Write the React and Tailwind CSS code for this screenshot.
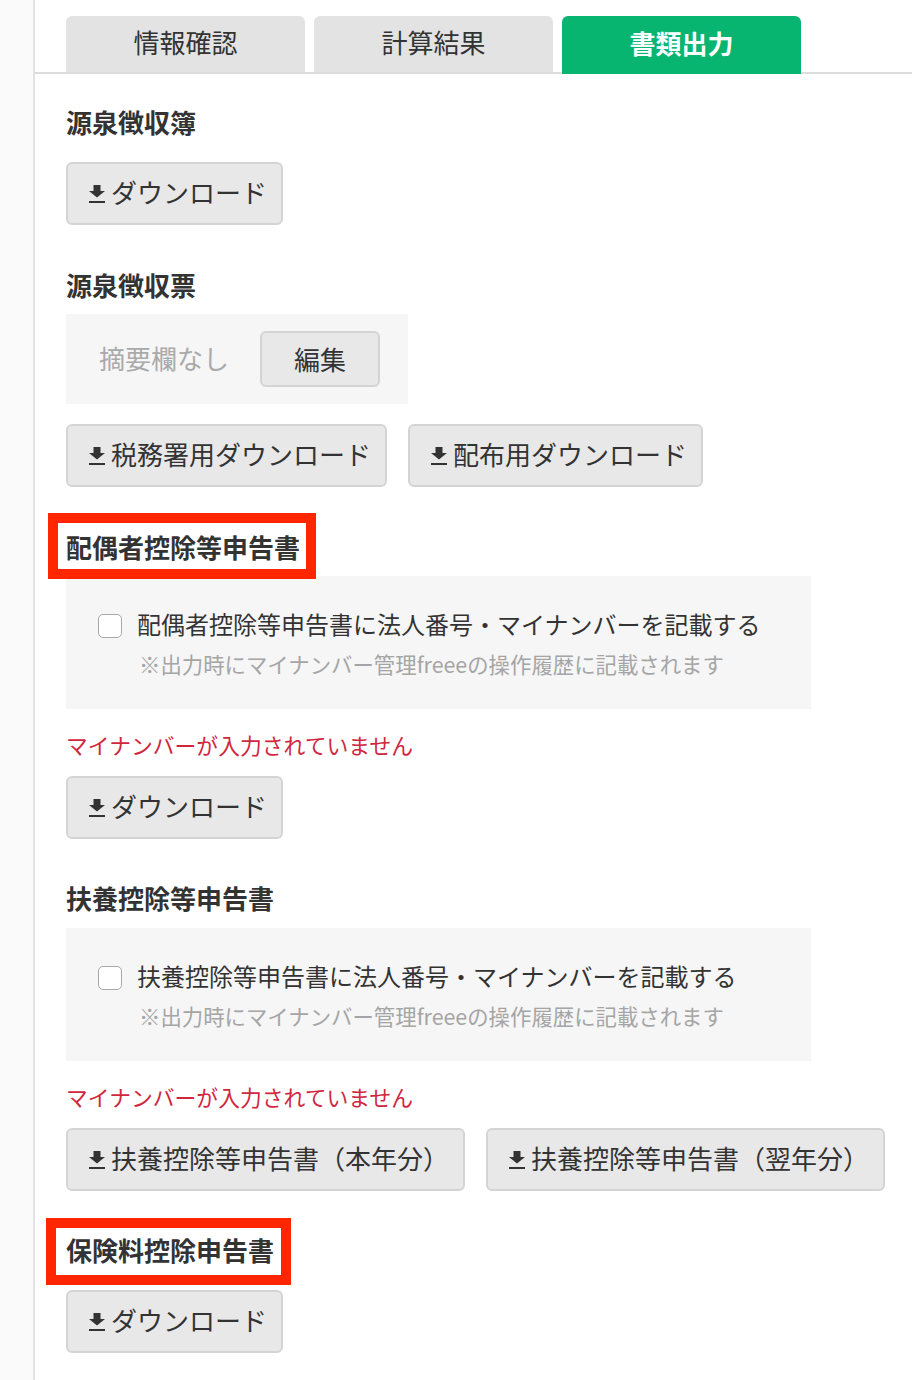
import React from "react";

const FONT = { fontFamily: '"Noto Sans CJK JP", "Noto Sans", sans-serif' };

function DlIcon() {
  return (
    <svg width="16" height="18" viewBox="0 0 16 18" className="shrink-0">
      <rect x="4.5" y="0" width="7" height="6.5" fill="#333" />
      <polygon points="0,6 16,6 8,12.5" fill="#333" />
      <rect x="0" y="16" width="16" height="2" fill="#333" />
    </svg>
  );
}

function DlButton({ label }) {
  return (
    <button className="h-[63px] flex items-center gap-[6px] pl-[21px] pr-[14px] bg-[#e8e8e8] border-2 border-[#d4d4d4] rounded-[6px] text-[26px] text-[#333] leading-none whitespace-nowrap">
      <DlIcon />
      <span className="-translate-y-[2px]">{label}</span>
    </button>
  );
}

function Heading({ children, className = "", annotated = false, box }) {
  return (
    <div className={`relative h-[38px] leading-[38px] text-[26px] font-bold text-[#333] ${className}`}>
      <span className="relative z-10 inline-block -translate-y-[2px]">{children}</span>
      {annotated && (
        <div className={`absolute border-[10px] border-[#ff2600] pointer-events-none ${box}`} />
      )}
    </div>
  );
}

function CheckBox({ label, className = "" }) {
  return (
    <div className={`w-[745px] h-[133px] bg-[#f6f6f6] pl-[32px] pt-[34px] ${className}`}>
      <div className="flex items-center gap-[15px] h-[32px]">
        <span className="w-[24px] h-[24px] rounded-[5px] border border-[#a8a8a8] bg-white shrink-0" />
        <span className="text-[24px] text-[#333] leading-[32px] whitespace-nowrap -translate-y-[2px]">{label}</span>
      </div>
      <div className="ml-[41px] mt-[9px] text-[21.4px] leading-[28px] text-[#a5a5a5] whitespace-nowrap -translate-y-[1px]">
        ※出力時にマイナンバー管理freeeの操作履歴に記載されます
      </div>
    </div>
  );
}

function ErrorText({ className = "" }) {
  return (
    <div className={`text-[21.8px] leading-[32px] text-[#d0273e] -translate-y-[2px] ${className}`}>
      マイナンバーが入力されていません
    </div>
  );
}

export default function App() {
  const tabs = ["情報確認", "計算結果", "書類出力"];
  return (
    <div className="flex min-h-[1380px] w-[912px] bg-white" style={FONT}>
      <div className="w-[35px] shrink-0 bg-[#fafafa] border-r-2 border-[#e2e2e2]" />
      <div className="flex-1 flex flex-col">
        <div className="flex gap-[9px] pl-[31px] pt-[16px] border-b-2 border-[#dddddd] h-[74px]">
          {tabs.map((t, i) => (
            <div
              key={t}
              className={
                i === 2
                  ? "w-[239px] h-[58px] rounded-t-[6px] bg-[#08b570] text-white font-bold text-[26px] flex items-center justify-center"
                  : "w-[239px] h-[56px] rounded-t-[6px] bg-[#e3e3e3] text-[#333] text-[26px] flex items-center justify-center"
              }
            >
              <span className="-translate-y-[3px]">{t}</span>
            </div>
          ))}
        </div>

        <div className="flex flex-col items-start pl-[31px]">
          <Heading className="mt-[31px]">源泉徴収簿</Heading>
          <div className="mt-[19px]">
            <DlButton label="ダウンロード" />
          </div>

          <Heading className="mt-[43px]">源泉徴収票</Heading>
          <div className="mt-[8px] w-[342px] h-[90px] bg-[#f6f6f6] flex items-center pl-[33px] gap-[31px]">
            <span className="text-[26px] text-[#aaaaaa] whitespace-nowrap -translate-y-[2px]">摘要欄なし</span>
            <button className="w-[120px] h-[56px] bg-[#e8e8e8] border-2 border-[#d4d4d4] rounded-[6px] text-[26px] text-[#333] flex items-center justify-center">
              <span className="-translate-y-[1px]">編集</span>
            </button>
          </div>
          <div className="mt-[20px] flex gap-[21px]">
            <DlButton label="税務署用ダウンロード" />
            <DlButton label="配布用ダウンロード" />
          </div>

          <Heading
            className="mt-[43px]"
            annotated
            box="left-[-18px] top-[-17px] w-[268px] h-[66px]"
          >
            配偶者控除等申告書
          </Heading>
          <CheckBox className="mt-[8px]" label="配偶者控除等申告書に法人番号・マイナンバーを記載する" />
          <ErrorText className="mt-[22px]" />
          <div className="mt-[13px]">
            <DlButton label="ダウンロード" />
          </div>

          <Heading className="mt-[42px]">扶養控除等申告書</Heading>
          <CheckBox className="mt-[9px]" label="扶養控除等申告書に法人番号・マイナンバーを記載する" />
          <ErrorText className="mt-[22px]" />
          <div className="mt-[13px] flex gap-[21px]">
            <DlButton label="扶養控除等申告書（本年分）" />
            <DlButton label="扶養控除等申告書（翌年分）" />
          </div>

          <Heading
            className="mt-[42px]"
            annotated
            box="left-[-20px] top-[-15px] w-[245px] h-[67px]"
          >
            保険料控除申告書
          </Heading>
          <div className="mt-[19px]">
            <DlButton label="ダウンロード" />
          </div>
        </div>
      </div>
    </div>
  );
}
